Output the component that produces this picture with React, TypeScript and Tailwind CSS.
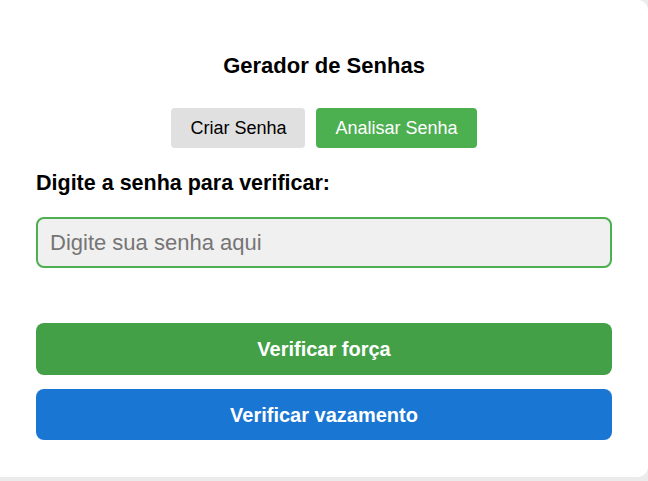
import React from 'react';

const App: React.FC = () => {
  return (
    <div className="min-h-screen bg-[#ebebeb] font-['Liberation_Sans',Arial,sans-serif]">
      <div className="w-full h-[477px] bg-white rounded-r-[10px] px-[36px] pt-[53px] flex flex-col">
        <h1 className="text-center text-[22px] leading-[26px] font-bold text-black">Gerador de Senhas</h1>

        <div className="mt-[29px] flex justify-center gap-[11px]">
          <button className="h-[40px] px-[19px] rounded-[4px] bg-[#e0e0e0] text-black text-[18px]">
            Criar Senha
          </button>
          <button className="h-[40px] px-[19px] rounded-[4px] bg-[#4caf50] text-white text-[18px]">
            Analisar Senha
          </button>
        </div>

        <label className="mt-[23px] text-[21.5px] leading-[24px] font-bold text-black">
          Digite a senha para verificar:
        </label>

        <input
          type="password"
          placeholder="Digite sua senha aqui"
          className="mt-[22px] h-[51px] w-full rounded-[8px] border-2 border-[#4caf50] bg-[#f0f0f0] px-[12px] text-[22px] text-black placeholder:text-[#757575] outline-none"
        />

        <button className="mt-[55px] h-[52px] w-full rounded-[8px] bg-[#43a047] text-white text-[20px] font-bold">
          Verificar força
        </button>
        <button className="mt-[14px] h-[51px] w-full rounded-[8px] bg-[#1976d2] text-white text-[20px] font-bold">
          Verificar vazamento
        </button>
      </div>
    </div>
  );
};

export default App;
